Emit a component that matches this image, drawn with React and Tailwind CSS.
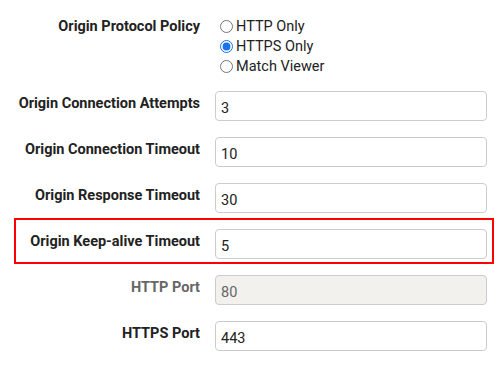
import { useState } from "react";

const rows = [
  { label: "Origin Connection Attempts", value: "3" },
  { label: "Origin Connection Timeout", value: "10" },
  { label: "Origin Response Timeout", value: "30" },
  { label: "Origin Keep-alive Timeout", value: "5", highlight: true },
  { label: "HTTP Port", value: "80", disabled: true },
  { label: "HTTPS Port", value: "443" },
];

const policies = ["HTTP Only", "HTTPS Only", "Match Viewer"];

export default function App() {
  const [policy, setPolicy] = useState("HTTPS Only");

  return (
    <div className="w-[502px] h-[366px] bg-white text-[14.5px] text-[#222] font-['Roboto','Liberation_Sans',sans-serif] overflow-hidden">
      {/* Protocol policy */}
      <div className="ml-[14px] w-[480px] border-2 border-transparent pt-[14px] pb-[2px] pr-[5px] flex gap-[15px]">
        <div className="w-[184px] shrink-0 text-right font-bold leading-5 pt-[1px]">
          Origin Protocol Policy
        </div>
        <div className="flex flex-col">
          {policies.map((p) => (
            <label key={p} className="flex items-center h-5 leading-5">
              <input
                type="radio"
                name="policy"
                className="w-[13px] h-[13px] ml-[5px] mr-[3px] accent-[#1a73e8]"
                checked={policy === p}
                onChange={() => setPolicy(p)}
              />
              <span className="pt-[2px]">{p}</span>
            </label>
          ))}
        </div>
      </div>

      {/* Fields */}
      {rows.map((r) => (
        <div
          key={r.label}
          className={`ml-[14px] w-[480px] border-2 pt-[9px] pb-[3px] pr-[5px] flex items-start gap-[15px] ${
            r.highlight ? "border-[#ff0000]" : "border-transparent"
          }`}
        >
          <div
            className={`w-[184px] shrink-0 text-right font-bold leading-5 pt-[3px] ${
              r.disabled ? "text-[#666]" : ""
            }`}
          >
            {r.label}
          </div>
          <input
            type="text"
            defaultValue={r.value}
            disabled={r.disabled}
            className={`w-[272px] h-[30px] rounded-[4px] border border-[#ccc] px-[5px] pt-[5px] leading-5 outline-none ${
              r.disabled ? "bg-[#f2f1ee] text-[#666]" : "bg-white text-[#222]"
            }`}
          />
        </div>
      ))}
    </div>
  );
}
